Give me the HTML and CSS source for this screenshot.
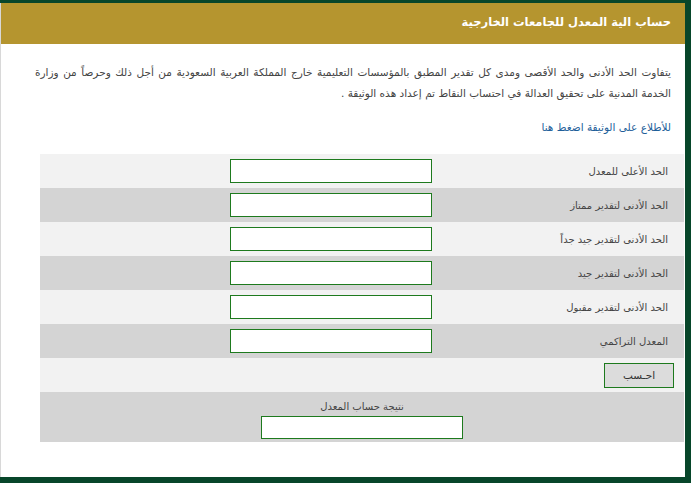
FILE: index.html
```html
<!DOCTYPE html>
<html lang="ar" dir="rtl">
<head>
    <meta charset="UTF-8">
    <meta name="viewport" content="width=device-width, initial-scale=1.0">
    <title>حساب الية المعدل للجامعات الخارجية</title>
    <link rel="stylesheet" href="styles.css">
</head>
<body>

    <div class="panel">
        <div class="panel-head">حساب الية المعدل للجامعات الخارجية</div>

        <div class="intro">
            <p class="note">يتفاوت الحد الأدنى والحد الأقصى ومدى كل تقدير المطبق بالمؤسسات التعليمية خارج المملكة العربية السعودية من أجل ذلك وحرصاً من وزارة الخدمة المدنية على تحقيق العدالة في احتساب النقاط تم إعداد هذه الوثيقة .</p>
            <a class="doc-link" href="#">للأطلاع على الوثيقة اضغط هنا</a>
        </div>

        <table class="calc">
            <tr class="odd">
                <td class="label">الحد الأعلى للمعدل</td>
                <td class="field"><input type="text" id="max_gpa"></td>
            </tr>
            <tr class="even">
                <td class="label">الحد الأدنى لتقدير ممتاز</td>
                <td class="field"><input type="text" id="min_excellent"></td>
            </tr>
            <tr class="odd">
                <td class="label">الحد الأدنى لتقدير جيد جداً</td>
                <td class="field"><input type="text" id="min_very_good"></td>
            </tr>
            <tr class="even">
                <td class="label">الحد الأدنى لتقدير جيد</td>
                <td class="field"><input type="text" id="min_good"></td>
            </tr>
            <tr class="odd">
                <td class="label">الحد الأدنى لتقدير مقبول</td>
                <td class="field"><input type="text" id="min_pass"></td>
            </tr>
            <tr class="even">
                <td class="label">المعدل التراكمي</td>
                <td class="field"><input type="text" id="gpa"></td>
            </tr>
            <tr class="odd">
                <td class="action"><button type="button" id="calc_btn">احـسب</button></td>
                <td></td>
            </tr>
            <tr class="even">
                <td class="result" colspan="2">
                    <div class="result-title">نتيجة حساب المعدل</div>
                    <input type="text" id="result" readonly>
                </td>
            </tr>
        </table>
    </div>

</body>
</html>
```

FILE: styles.css
```css
/* page frame */
body {
    margin: 0;
    padding: 3px 6px 6px 0;
    background-color: #07462a;
    font-family: "DejaVu Sans", "Liberation Sans", sans-serif;
}
.panel {
    background-color: #ffffff;
    border-left: 1px solid #d8d8d8;
    height: 474px;
    box-sizing: border-box;
}
.panel-head {
    background-color: #b5952f;
    color: #ffffff;
    font-weight: bold;
    font-size: 11.5px;
    height: 41px;
    line-height: 38px;
    padding-right: 14px;
}
.intro {
    padding: 18px 14px 0 34px;
}
.note {
    margin: 0;
    font-size: 10.5px;
    line-height: 21px;
    color: #444;
    text-align: justify;
}
.doc-link {
    display: block;
    margin-top: 13px;
    font-size: 10.5px;
    line-height: 21px;
    color: #1f5f9a;
    text-decoration: none;
}
.calc {
    width: 644px;
    margin: 16px 1px 0 0;
    border-collapse: collapse;
}
.calc td {
    padding: 0;
    height: 34px;
}
.calc tr.odd {
    background-color: #f2f2f2;
}
.calc tr.even {
    background-color: #d4d4d4;
}
.calc .label {
    width: 234px;
    padding-right: 16px;
    font-size: 10px;
    color: #444;
}
.calc .field {
    padding-right: 2px;
}
.calc input {
    width: 202px;
    height: 24px;
    box-sizing: border-box;
    border: 1px solid #1e7a1e;
    background: #fff;
    margin: 0;
    display: block;
}
.calc .action {
    padding-right: 10px;
}
#calc_btn {
    display: block;
    width: 70px;
    height: 25px;
    background-color: #dcdcdc;
    border: 1px solid #1e7a1e;
    font-family: inherit;
    font-size: 10.5px;
    color: #333;
}
.calc .result {
    height: 50px;
    text-align: center;
    vertical-align: top;
}
.result-title {
    font-size: 10px;
    color: #444;
    padding-top: 7px;
    line-height: 16px;
}
#result {
    margin: 1px auto 0;
    height: 23px;
}
```
